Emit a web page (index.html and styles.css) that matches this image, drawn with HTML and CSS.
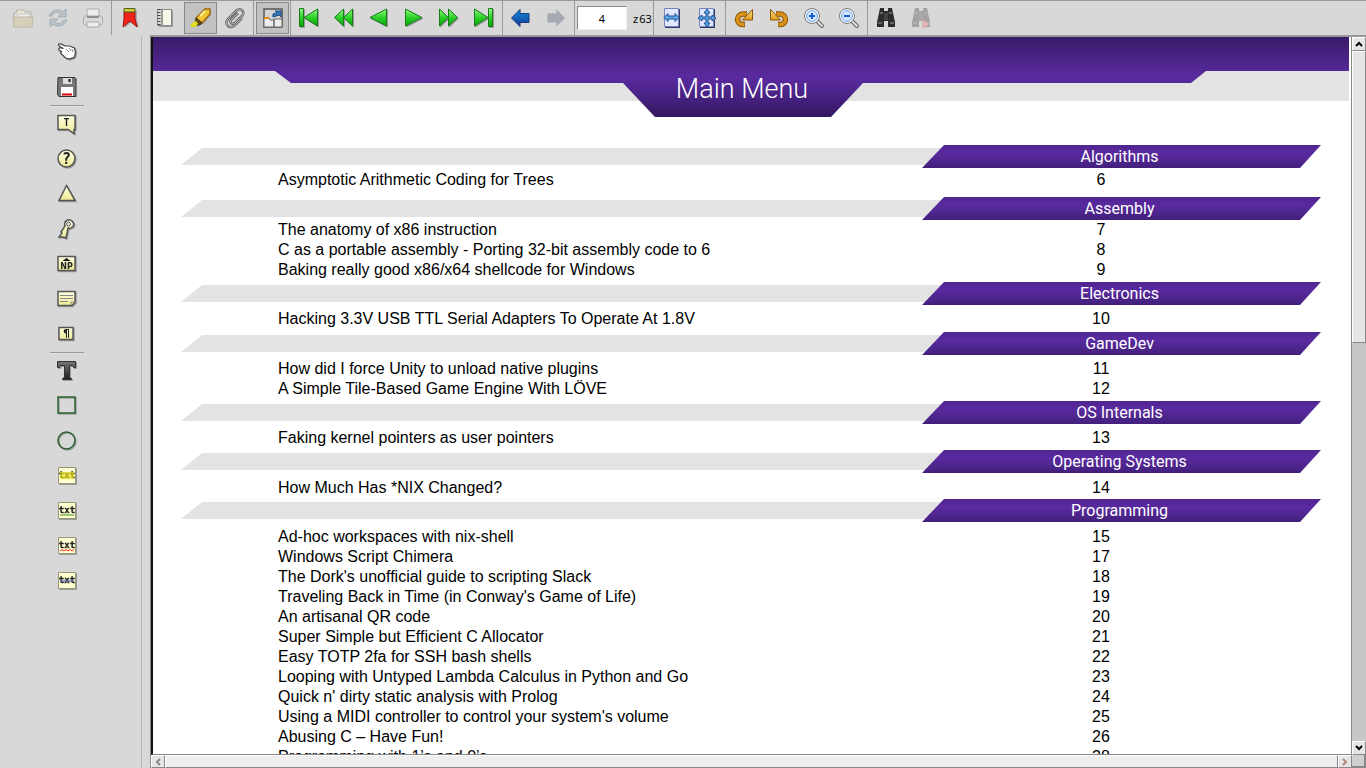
FILE: index.html
```html
<!DOCTYPE html>
<html lang="en">
<head>
<meta charset="utf-8">
<title>Main Menu</title>
<link rel="stylesheet" href="styles.css">
</head>
<body>
<svg class="defs" width="0" height="0" aria-hidden="true">
  <defs>
    <linearGradient id="green" x1="0" y1="0" x2="0" y2="1"><stop offset="0" stop-color="#8dff7c"/><stop offset=".5" stop-color="#2fd02b"/><stop offset="1" stop-color="#02a802"/></linearGradient>
    <linearGradient id="blue" x1="0" y1="0" x2="0" y2="1"><stop offset="0" stop-color="#0a8fe0"/><stop offset="1" stop-color="#1c3492"/></linearGradient>
    <linearGradient id="note" x1="0" y1="0" x2="0" y2="1"><stop offset="0" stop-color="#ffffe2"/><stop offset="1" stop-color="#eeea94"/></linearGradient>
    <linearGradient id="gold" x1="0" y1="0" x2="0" y2="1"><stop offset="0" stop-color="#ffe08a"/><stop offset="1" stop-color="#dd9a1c"/></linearGradient>
    <linearGradient id="dark" x1="0" y1="0" x2="0" y2="1"><stop offset="0" stop-color="#777"/><stop offset="1" stop-color="#1d1d1d"/></linearGradient>
    <linearGradient id="head" x1="0" y1="0" x2="0" y2="1"><stop offset="0" stop-color="#381c67"/><stop offset=".5" stop-color="#5a2aa0"/><stop offset=".64" stop-color="#4f2690"/><stop offset="1" stop-color="#341860"/></linearGradient>
    <symbol id="binoc" viewBox="0 0 22 22"><path d="M5 1h4v3h4V1h4l1 5 2 9v5h-7v-6H9v6H2v-5l2-9z" fill="#2c2c2c"/><path d="M5 6h3M14 6h3M3 16h4M15 16h4M9 9h4" stroke="#777" stroke-width="1.500"/><path d="M9 6h4v7H9z" fill="#444"/></symbol>
    <symbol id="lens" viewBox="0 0 22 22"><path d="M14 14l5 5" stroke="#666" stroke-width="4" stroke-linecap="round"/><path d="M14 14l5 5" stroke="#ddd" stroke-width="2" stroke-linecap="round"/><circle cx="9" cy="9" r="7.500" fill="#fff" stroke="#777"/><circle cx="9" cy="9" r="5.500" fill="#cfe3fb" stroke="#75a8ee"/></symbol>
    <symbol id="turn" viewBox="0 0 22 22"><path d="M12 17.500H9.500A5 5 0 0 1 4.500 12.500A5.500 5.500 0 0 1 10 7h4" fill="none" stroke="#8a5606" stroke-width="5.500"/><path d="M19.500 2.500v10.500H9.500z" fill="url(#gold)" stroke="#8a5606" stroke-linejoin="round"/><path d="M11.500 17.500h-2A5 5 0 0 1 4.500 12.500A5.500 5.500 0 0 1 10 7h3.500" fill="none" stroke="#d8921a" stroke-width="3.500"/></symbol>
  </defs>
</svg>
<div class="app">
  <header class="toolbar" role="toolbar" aria-label="Document">
    <button class="tool" disabled aria-label="Open"><svg viewBox="0 0 22 22" opacity=".55"><path d="M2 19V6h2l1-3h7l1 2h6v14z" fill="#f5ecd5" stroke="#999180"/><path d="M5 7h13v5H5z" fill="#fff" stroke="#bbb"/><path d="M1 10h20l-1 10H2z" fill="#d8c8a2" stroke="#a79c80"/></svg></button>
    <button class="tool" disabled aria-label="Reload"><svg viewBox="0 0 22 22" opacity=".5"><path d="M2 9c2-6 10-8 14-4l3-3v8h-8l3-3c-4-3-8-1-9 2z" fill="#9db0bd" stroke="#718492"/><path d="M20 13c-2 6-10 8-14 4l-3 3v-8h8l-3 3c4 3 8 1 9-2z" fill="#9db0bd" stroke="#718492"/></svg></button>
    <button class="tool" disabled aria-label="Print"><svg viewBox="0 0 22 22" opacity=".55"><path d="M5 2h12v8H5z" fill="#fff" stroke="#888"/><rect x="1.500" y="9" width="19" height="9" rx="2" fill="#ddd" stroke="#888"/><path d="M5 10h12" stroke="#555" stroke-width="2"/><path d="M5 15h12v5H5z" fill="#fff" stroke="#888"/></svg></button>
    <span class="rule"></span>
    <button class="tool" aria-label="Bookmarks"><svg viewBox="0 0 22 22"><path d="M6 3h12v9l2 9-7-6-7 6z" fill="#aaa"/><path d="M5 5h11v7l2 8-7-6-7 6 1-8z" fill="#f22418" stroke="#991010"/><path d="M5 1.500h11v3.500H5z" fill="#c9d03a" stroke="#5b5d1a"/></svg></button>
    <button class="tool" aria-label="Thumbnails"><svg viewBox="0 0 22 22"><path d="M5 3h14v17H5z" fill="#999"/><path d="M3.500 2.500h14v16h-14z" fill="#f8f8e8" stroke="#888"/><path d="M4 3h3v15H4z" fill="#ddd"/><path d="M5 2v17" stroke="#444" stroke-width="3" stroke-dasharray="1 2"/><path d="M8 3v15" stroke="#444"/></svg></button>
    <button class="tool pressed" aria-pressed="true" aria-label="Annotations"><svg viewBox="0 0 22 22"><path d="M3 20l4-1 6-2 8-9v-4z" fill="#777" opacity=".6"/><path d="M6 11l9-9 5 0 0 5-8 9z" fill="#efc735" stroke="#a46913" stroke-width="1.500"/><path d="M6 11l6 5-2 2H5z" fill="#655017" stroke="#403010"/><path d="M1 17l5-3 2 3-3 3H1z" fill="#e3dc18"/><path d="M10 9l5-5" stroke="#fff29a" stroke-width="2"/></svg></button>
    <button class="tool" aria-label="Attachments"><svg viewBox="0 0 22 22" fill="none"><path d="M14 6l-7 7c-2 3 2 5 4 3l7-7c4-5-2-9-6-5l-8 8c-5 6 3 11 7 6l7-7" stroke="#666" stroke-width="2.500"/><path d="M14 6l-7 7c-2 3 2 5 4 3l7-7c4-5-2-9-6-5l-8 8c-5 6 3 11 7 6l7-7" stroke="#bbb"/></svg></button>
    <span class="rule"></span>
    <button class="tool pressed" aria-pressed="true" aria-label="Fit window"><svg viewBox="0 0 22 22"><rect x="2" y="2" width="18" height="18" fill="#d4d4d4" stroke="#555" stroke-width="1.500"/><path d="M2 11h5l1 2h4v7H2zM12 12h8v8h-8z" fill="#eee" stroke="#666"/><path d="M2 11h5" stroke="#e08b10" stroke-width="2"/><path d="M11 10V7l4-1-2-2h6v6l-2-2z" fill="#3977b7" stroke="#1c4e87"/></svg></button>
    <span class="rule"></span>
    <button class="tool" aria-label="First page"><svg viewBox="0 0 22 22" class="shadow" fill="url(#green)" stroke="#187a18"><path d="M1.500 1.500h4v18h-4zM19.500 2v17L6 10.500z"/></svg></button>
    <button class="tool" aria-label="Back ten pages"><svg viewBox="0 0 22 22" class="shadow" fill="url(#green)" stroke="#187a18"><path d="M10.500 2v17L1.500 10.500zM19.500 2v17l-9-8.500z"/></svg></button>
    <button class="tool" aria-label="Previous page"><svg viewBox="0 0 22 22" class="shadow" fill="url(#green)" stroke="#187a18"><path d="M18.500 2v17L2 10.500z"/></svg></button>
    <button class="tool" aria-label="Next page"><svg viewBox="0 0 22 22" class="shadow" fill="url(#green)" stroke="#187a18"><path d="M2.500 2v17L19 10.500z"/></svg></button>
    <button class="tool" aria-label="Forward ten pages"><svg viewBox="0 0 22 22" class="shadow" fill="url(#green)" stroke="#187a18"><path d="M1.500 2v17l9-8.500zM10.500 2v17l9-8.500z"/></svg></button>
    <button class="tool" aria-label="Last page"><svg viewBox="0 0 22 22" class="shadow" fill="url(#green)" stroke="#187a18"><path d="M15.500 1.500h4v18h-4zM1.500 2v17L15 10.500z"/></svg></button>
    <span class="rule"></span>
    <button class="tool" aria-label="Back"><svg viewBox="0 0 22 22"><path d="M1.500 11L10 2.500V6.500h9v9h-9v4z" fill="url(#blue)" stroke="#173a7a"/></svg></button>
    <button class="tool" disabled aria-label="Forward"><svg viewBox="0 0 22 22"><path d="M20 11l-8.500-8.500V6.500h-9v9h9v4z" fill="#a4aab0" stroke="#b7bbc0"/></svg></button>
    <span class="rule"></span>
    <label class="pager"><input type="text" value="4" aria-label="Page"><span class="total"><span>z</span><span>63</span></span></label>
    <span class="rule"></span>
    <button class="tool" aria-label="Fit width"><svg viewBox="0 0 22 22"><path d="M4 2h15v19H4z" fill="#333a66"/><path d="M3.500 1.500h14v18h-14z" fill="#e2e8ff" stroke="#7783bd"/><path d="M3 10.500l4-4V9h7V6.500l4 4-4 4V12H7v2.500z" fill="#5aa6e8" stroke="#1d5191"/></svg></button>
    <button class="tool" aria-label="Fit page"><svg viewBox="0 0 22 22"><path d="M4 2h15v19H4z" fill="#333a66"/><path d="M3.500 1.500h14v18h-14z" fill="#e2e8ff" stroke="#7783bd"/><path d="M11 2l3 4h-2v4h4V8l4 3-4 3v-2h-4v4h2l-3 4-3-4h2v-4H6v2l-4-3 4-3v2h4V6H8z" fill="#5aa6e8" stroke="#1d5191"/></svg></button>
    <span class="rule"></span>
    <button class="tool" aria-label="Rotate right"><svg><use href="#turn"/></svg></button>
    <button class="tool" aria-label="Rotate left"><svg class="flip"><use href="#turn"/></svg></button>
    <button class="tool" aria-label="Zoom in"><svg viewBox="0 0 22 22"><use href="#lens"/><path d="M9 6v6M6 9h6" stroke="#175ed0" stroke-width="2"/></svg></button>
    <button class="tool" aria-label="Zoom out"><svg viewBox="0 0 22 22"><use href="#lens"/><path d="M6 9h6" stroke="#175ed0" stroke-width="2"/></svg></button>
    <span class="rule"></span>
    <button class="tool" aria-label="Find"><svg><use href="#binoc"/></svg></button>
    <button class="tool" disabled aria-label="Find next"><svg viewBox="0 0 22 22" opacity=".3"><use href="#binoc"/><path d="M13 13v8l7-4z" fill="#f77" stroke="#c33"/></svg></button>
  </header>
  <div class="body">
    <aside class="sidebar" role="toolbar" aria-label="Annotation tools">
      <button class="tool" aria-label="Hand"><svg viewBox="0 0 22 22" class="shadow"><path d="M2.500 4c0-2 2-1.500 7 1h4l5 2 1 4-1 5-5 2-4-1-5-5 1-1.500-2-1c-2-1.500 0-3 1-2.500l3 .5-4-2z" fill="#fff" stroke="#444" stroke-width="1.200"/><path d="M10 8l3 3M13 7l2 3M16 8l1 3" stroke="#888" fill="none"/></svg></button>
      <button class="tool" aria-label="Save"><svg viewBox="0 0 22 22"><path d="M2 1.500h17l1 1v18H3l-1.500-2z" fill="#777" stroke="#333"/><path d="M7 2h9v6H7z" fill="#ddd"/><path d="M13.500 3v3" stroke="#111" stroke-width="2"/><path d="M5 11h12v9H5z" fill="#fff"/><path d="M6 18.500h10" stroke="#d00" stroke-width="2"/></svg></button>
      <span class="line"></span>
      <button class="tool" aria-label="Note"><svg viewBox="0 0 22 22" class="shadow"><path d="M2 2.500h17v14h-1v4l-6-4H2z" fill="url(#note)" stroke="#555" stroke-width="1.500"/><text x="10.500" y="13" class="glyph" font-size="10">T</text></svg></button>
      <button class="tool" aria-label="Help note"><svg viewBox="0 0 22 22" class="shadow"><circle cx="10.500" cy="10.500" r="8.500" fill="url(#note)" stroke="#555" stroke-width="1.500"/><text x="10.500" y="16" class="glyph" font-size="15">?</text></svg></button>
      <button class="tool" aria-label="Insert"><svg viewBox="0 0 22 22" class="shadow"><path d="M10.500 2.500L3 17.500h16z" fill="url(#note)" stroke="#555" stroke-width="1.500"/></svg></button>
      <button class="tool" aria-label="Key"><svg viewBox="0 0 22 22" class="shadow"><path d="M9 8c-2-5 4-8 7-5 4 4 0 8-4 7l-2 10-3-1H3l3-4-1-1z" fill="url(#note)" stroke="#555" stroke-width="1.500"/><circle cx="12.500" cy="6" r="2" fill="#eee" stroke="#555"/></svg></button>
      <button class="tool" aria-label="New paragraph"><svg viewBox="0 0 22 22" class="shadow"><path d="M2 3.500h17v14H2z" fill="url(#note)" stroke="#555" stroke-width="1.500"/><path d="M10.500 5l4 3h-8z" fill="#111"/><text x="10.500" y="16" class="glyph sans" font-size="8">NP</text></svg></button>
      <button class="tool" aria-label="Comment"><svg viewBox="0 0 22 22" class="shadow"><path d="M2 3.500h17v11l-3 3H2z" fill="url(#note)" stroke="#555" stroke-width="1.500"/><path d="M4 7.500h13M4 10.500h13M4 13.500h8M15 17v-3h4" stroke="#888" fill="none"/></svg></button>
      <button class="tool" aria-label="Paragraph"><svg viewBox="0 0 22 22" class="shadow"><path d="M3 4.500h14v12H3z" fill="url(#note)" stroke="#555" stroke-width="1.500"/><text x="10.500" y="14" class="glyph sans" font-size="11">¶</text></svg></button>
      <span class="line"></span>
      <button class="tool" aria-label="Text"><svg viewBox="0 0 22 22" class="shadow"><path d="M1.500 1.500h18v6h-2l-1-2h-3v12l2 1v1h-9v-1l2-1v-12h-4l-1 2h-2z" fill="url(#dark)" stroke="#333"/></svg></button>
      <button class="tool" aria-label="Rectangle"><svg viewBox="0 0 22 22" class="shadow"><path d="M2 2h17v16H2z" fill="none" stroke="#2a622d" stroke-width="1.500"/></svg></button>
      <button class="tool" aria-label="Ellipse"><svg viewBox="0 0 22 22" class="shadow"><circle cx="10.500" cy="10.500" r="8.500" fill="none" stroke="#2a622d" stroke-width="1.500"/></svg></button>
      <button class="tool" aria-label="Highlight"><svg viewBox="0 0 22 22" class="shadow"><path d="M2.500 2.500h17v16h-17z" fill="#ffffcf" stroke="#96967c"/><text x="11" y="13" class="glyph txt" font-size="9">txt</text><path d="M4 7h14v7H4z" fill="#e8e020" opacity=".7"/></svg></button>
      <button class="tool" aria-label="Underline"><svg viewBox="0 0 22 22" class="shadow"><path d="M2.500 2.500h17v16h-17z" fill="#ffffcf" stroke="#96967c"/><text x="11" y="13" class="glyph txt" font-size="9">txt</text><path d="M4 15h14" stroke="#3d8a22"/></svg></button>
      <button class="tool" aria-label="Squiggly"><svg viewBox="0 0 22 22" class="shadow"><path d="M2.500 2.500h17v16h-17z" fill="#ffffcf" stroke="#96967c"/><text x="11" y="13" class="glyph txt" font-size="9">txt</text><path d="M4 16l2-1.500 2 1.500 2-1.500 2 1.500 2-1.500 2 1.500 2-1.500" fill="none" stroke="#f22"/></svg></button>
      <button class="tool" aria-label="Strike out"><svg viewBox="0 0 22 22" class="shadow"><path d="M2.500 2.500h17v16h-17z" fill="#ffffcf" stroke="#96967c"/><text x="11" y="13" class="glyph txt" font-size="9">txt</text><path d="M4 11h14" stroke="#666bb0" stroke-width="2" opacity=".7"/></svg></button>
    </aside>
    <div class="splitter"></div>
    <main class="viewer">
      <div class="viewport">
        <article class="page">
          <div class="masthead">
            <svg viewBox="0 0 1196 80" preserveAspectRatio="none" aria-hidden="true"><path d="M0 0h1196v64H0z" fill="#e3e3e3"/><path d="M0 0h1196v34h-143l-15 12H710l-32 34H502l-32-34H138l-16-12H0z" fill="url(#head)"/></svg>
            <h1>Main Menu</h1>
          </div>
          <section class="loose"><div class="banner"><i></i><h2>Algorithms</h2></div>
            <ul><li><a href="#p6"><span>Asymptotic Arithmetic Coding for Trees</span><b>6</b></a></li></ul></section>
          <section class="compact"><div class="banner"><i></i><h2>Assembly</h2></div>
            <ul><li><a href="#p7"><span>The anatomy of x86 instruction</span><b>7</b></a></li>
            <li><a href="#p8"><span>C as a portable assembly - Porting 32-bit assembly code to 6</span><b>8</b></a></li>
            <li><a href="#p9"><span>Baking really good x86/x64 shellcode for Windows</span><b>9</b></a></li></ul></section>
          <section class="even"><div class="banner"><i></i><h2>Electronics</h2></div>
            <ul><li><a href="#p10"><span>Hacking 3.3V USB TTL Serial Adapters To Operate At 1.8V</span><b>10</b></a></li></ul></section>
          <section><div class="banner"><i></i><h2>GameDev</h2></div>
            <ul><li><a href="#p11"><span>How did I force Unity to unload native plugins</span><b>11</b></a></li>
            <li><a href="#p12"><span>A Simple Tile-Based Game Engine With LÖVE</span><b>12</b></a></li></ul></section>
          <section><div class="banner"><i></i><h2>OS Internals</h2></div>
            <ul><li><a href="#p13"><span>Faking kernel pointers as user pointers</span><b>13</b></a></li></ul></section>
          <section class="low"><div class="banner"><i></i><h2>Operating Systems</h2></div>
            <ul><li><a href="#p14"><span>How Much Has *NIX Changed?</span><b>14</b></a></li></ul></section>
          <section class="low"><div class="banner"><i></i><h2>Programming</h2></div>
            <ul><li><a href="#p15"><span>Ad-hoc workspaces with nix-shell</span><b>15</b></a></li>
            <li><a href="#p17"><span>Windows Script Chimera</span><b>17</b></a></li>
            <li><a href="#p18"><span>The Dork's unofficial guide to scripting Slack</span><b>18</b></a></li>
            <li><a href="#p19"><span>Traveling Back in Time (in Conway's Game of Life)</span><b>19</b></a></li>
            <li><a href="#p20"><span>An artisanal QR code</span><b>20</b></a></li>
            <li><a href="#p21"><span>Super Simple but Efficient C Allocator</span><b>21</b></a></li>
            <li><a href="#p22"><span>Easy TOTP 2fa for SSH bash shells</span><b>22</b></a></li>
            <li><a href="#p23"><span>Looping with Untyped Lambda Calculus in Python and Go</span><b>23</b></a></li>
            <li><a href="#p24"><span>Quick n' dirty static analysis with Prolog</span><b>24</b></a></li>
            <li><a href="#p25"><span>Using a MIDI controller to control your system's volume</span><b>25</b></a></li>
            <li><a href="#p26"><span>Abusing C – Have Fun!</span><b>26</b></a></li>
            <li><a href="#p28"><span>Programming with 1’s and 0’s</span><b>28</b></a></li></ul></section>
        </article>
      </div>
      <div class="vbar"><button aria-label="Scroll up"><svg viewBox="0 0 8 8"><path d="M1 6l3-3 3 3" fill="none" stroke="#000" stroke-width="2"/></svg></button><div class="track"><div class="thumb"></div></div><button aria-label="Scroll down"><svg viewBox="0 0 8 8"><path d="M1 2l3 3 3-3" fill="none" stroke="#000" stroke-width="2"/></svg></button></div>
      <div class="hbar"><button disabled aria-label="Scroll left"><svg viewBox="0 0 8 8"><path d="M6 1L3 4l3 3" fill="none" stroke="#888" stroke-width="2"/></svg></button><div class="thumb"></div><button disabled aria-label="Scroll right"><svg viewBox="0 0 8 8"><path d="M2 1l3 3-3 3" fill="none" stroke="#b08878" stroke-width="2"/></svg></button></div>
      <div class="corner"></div>
    </main>
  </div>
</div>
</body>
</html>
```
FILE: styles.css
```css
* { box-sizing: border-box; }
body { margin: 0; background: #d8d8d8; font-family: "Liberation Sans", Arial, sans-serif; }
.defs { position: absolute; }
.app { height: 100vh; display: flex; flex-direction: column; overflow: hidden; }
.toolbar { flex: none; height: 35px; display: flex; padding-left: 5px; border-top: 1px solid #999; }
.tool { flex: none; width: 35px; height: 34px; padding: 0; border: 0; background: none; display: grid; place-items: center; }
.tool svg { width: 22px; height: 22px; }
.tool.pressed { width: 33px; height: 32px; margin: 1px 0 0 2px; background: #c2c2c2; border: 1px solid #888; }
.rule { flex: none; width: 1px; margin-left: 1px; background: #999; }
.shadow { filter: drop-shadow(1px 1px 0 #9a9a9a); }
.flip { transform: scaleX(-1); }
.pager { width: 77px; padding-left: 2px; display: flex; align-items: center; gap: 6px; font: 11px "Noto Sans", sans-serif; white-space: nowrap; }
.pager input { width: 50px; height: 24px; border: 1px solid #888; border-right-color: #eee; border-bottom-color: #eee; background: #fff; text-align: center; font: inherit; padding: 0; }
.total { display: flex; gap: 1px; }
.glyph { font-family: "DejaVu Sans Mono", monospace; font-weight: bold; text-anchor: middle; fill: #222; }
.txt { stroke: #222; stroke-width: 0.3px; }
.sans { font-family: "DejaVu Sans", sans-serif; }

.body { flex: 1; min-height: 0; display: flex; }
.sidebar { flex: none; width: 141px; padding-right: 7px; display: flex; flex-direction: column; align-items: center; }
.sidebar .tool { height: 35px; padding-bottom: 2px; }
.line { flex: none; width: 34px; height: 2px; border-top: 1px solid #999; background: #e2e2e2; }
.splitter { flex: none; width: 9px; margin-top: 2px; border-left: 1px dotted #999; }

.viewer { flex: 1; min-width: 0; display: grid; grid-template-columns: minmax(0, 1fr) 14px; grid-template-rows: minmax(0, 1fr) 13px; border-top: 2px solid #999; border-left: 1px solid #888; }
.viewport { overflow: hidden; background: #fff; border-left: 2px solid #111; border-right: 1px solid #888; border-bottom: 1px solid #888; }
.page { margin-right: 2px; font-size: 16px; line-height: 20px; color: #000; }
.masthead { display: grid; margin-bottom: 28px; }
.masthead svg, .masthead h1 { grid-area: 1 / 1; width: 100%; height: 80px; }
.masthead h1 { margin: 0; padding: 34px 18px 0 0; text-align: center; color: #fff; font: 300 27px/37px Roboto, sans-serif; }
.banner { display: flex; align-items: center; margin: 0 28px; }
.banner i { flex: 1; height: 17px; margin-right: -22px; background: #e3e3e3; clip-path: polygon(21px 0, 100% 0, 100% 100%, 0 100%); }
.banner h2 { flex: 0 0 35%; margin: 0; padding: 1px 4px 0 0; text-align: center; color: #fff; font: 16px/22px Roboto, sans-serif; background: linear-gradient(#4f2690, #5a2aa0 35%, #42207b); clip-path: polygon(22px 0, 100% 0, calc(100% - 21px) 100%, 0 100%); }
ul { margin: 0; padding: 4px 0 2px; list-style: none; }
.loose ul { padding: 2px 0 7px; }
.compact ul { padding-top: 0; }
.even ul { padding-bottom: 3px; }
.low ul { padding: 5px 0 1px; }
li a { display: grid; grid-template-columns: 771fr 354fr 71fr; color: inherit; text-decoration: none; }
li span { padding-left: 125px; }
li b { font-weight: normal; text-align: center; }

.vbar { display: flex; flex-direction: column; }
.vbar button, .hbar button { flex: none; width: 14px; height: 14px; padding: 0; display: grid; place-items: center; }
.vbar button, .hbar button, .thumb { background: #e6e6e6; border: 1px solid #888; border-top-color: #fff; border-left-color: #fff; }
.hbar button { height: 13px; }
.vbar svg, .hbar svg { width: 8px; height: 8px; }
.track { flex: 1; background: #c7c7c7; }
.track .thumb { height: 42.3%; }
.hbar { display: flex; }
.hbar .thumb { flex: 1; background: #eee; }
.corner { background: #d0d0d0; border: 1px solid #888; border-width: 0 2px 2px 0; }
```
